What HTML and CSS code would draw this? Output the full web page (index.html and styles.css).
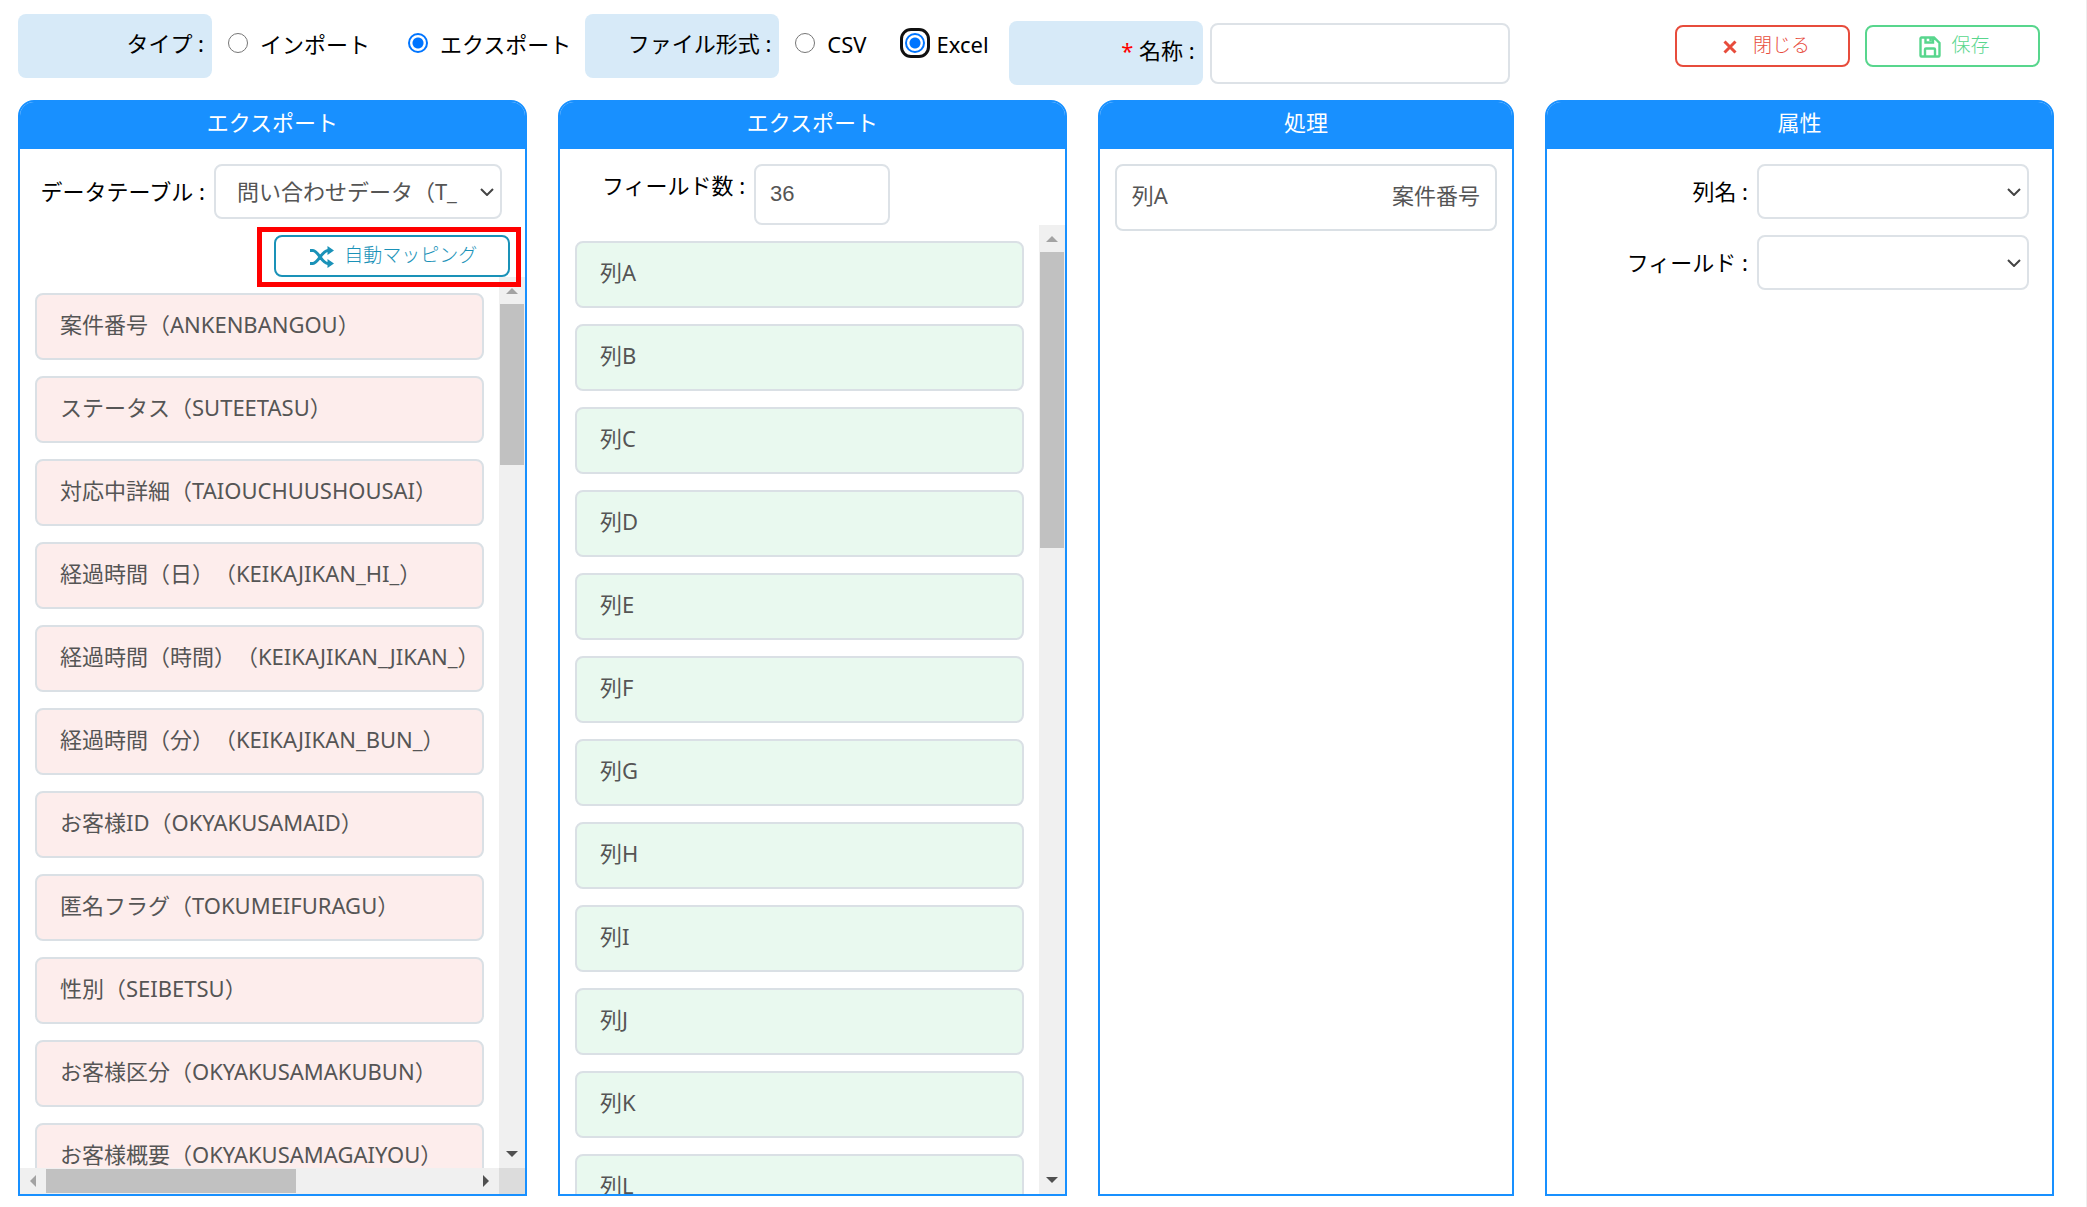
FILE: index.html
```html
<!DOCTYPE html>
<html lang="ja">
<head>
<meta charset="utf-8">
<title>エクスポート設定</title>
<link rel="stylesheet" href="styles.css">
</head>
<body>
<form class="page">
  <header class="toolbar">
    <div class="group" role="radiogroup" aria-labelledby="type-label">
      <span class="tag" id="type-label">タイプ :</span>
      <label class="option"><input class="radio" type="radio" name="type">インポート</label>
      <label class="option"><input class="radio" type="radio" name="type" checked>エクスポート</label>
    </div>
    <div class="group group-format" role="radiogroup" aria-labelledby="format-label">
      <span class="tag" id="format-label">ファイル形式 :</span>
      <label class="option"><input class="radio" type="radio" name="format">CSV</label>
      <label class="option"><input class="radio radio-focus" type="radio" name="format" checked>Excel</label>
    </div>
    <div class="group group-name">
      <label class="tag" for="name"><span class="required">*</span> 名称 :</label>
      <input class="field name-field" id="name" type="text">
    </div>
    <div class="actions">
      <button class="btn btn-close" type="button">
        <svg class="icon icon-close" viewBox="0 0 14 14" aria-hidden="true"><path d="M1.500 1.500L12.500 12.500M12.500 1.500L1.500 12.500" fill="none" stroke="currentColor" stroke-width="3"/></svg>
        閉じる
      </button>
      <button class="btn btn-save" type="button">
        <svg class="icon icon-save" viewBox="0 0 22 22" aria-hidden="true"><path d="M2.500 1.500H15L20.500 7V19.500A1 1 0 0 1 19.500 20.500H2.500A1 1 0 0 1 1.500 19.500V2.500A1 1 0 0 1 2.500 1.500ZM6.500 1.500V6.500H14V1.500M11.500 2V5M6 20.500V13.500A1 1 0 0 1 7 12.500H15A1 1 0 0 1 16 13.500V20.500" fill="none" stroke="currentColor" stroke-width="2.400"/></svg>
        保存
      </button>
    </div>
  </header>

  <main class="panels">
    <section class="panel">
      <h2 class="panel-title">エクスポート</h2>
      <div class="row">
        <label class="row-label" for="table">データテーブル :</label>
        <select class="field select table-select" id="table"><option>問い合わせデータ（T_</option></select>
      </div>
      <div class="row row-map">
        <div class="highlight">
          <button class="btn btn-map" type="button">
            <svg class="icon icon-shuffle" viewBox="0 0 24 22" aria-hidden="true"><path d="M0 4.500H3C8 4.500 12 17.500 18 17.500H19M0 17.500H3C8 17.500 12 4.500 18 4.500H19" fill="none" stroke="currentColor" stroke-width="3"/><path d="M17.500 0L24 4.500L17.500 9ZM17.500 13L24 17.500L17.500 22Z" fill="currentColor"/></svg>
            自動マッピング
          </button>
        </div>
      </div>
      <div class="scroller scroller-both">
        <ul class="list list-source">
          <li class="item">案件番号（ANKENBANGOU）</li>
          <li class="item">ステータス（SUTEETASU）</li>
          <li class="item">対応中詳細（TAIOUCHUUSHOUSAI）</li>
          <li class="item">経過時間（日）（KEIKAJIKAN_HI_）</li>
          <li class="item">経過時間（時間）（KEIKAJIKAN_JIKAN_）</li>
          <li class="item">経過時間（分）（KEIKAJIKAN_BUN_）</li>
          <li class="item">お客様ID（OKYAKUSAMAID）</li>
          <li class="item">匿名フラグ（TOKUMEIFURAGU）</li>
          <li class="item">性別（SEIBETSU）</li>
          <li class="item">お客様区分（OKYAKUSAMAKUBUN）</li>
          <li class="item">お客様概要（OKYAKUSAMAGAIYOU）</li>
        </ul>
        <div class="bar bar-v"><i class="arrow up"></i><i class="thumb thumb-source"></i><i class="arrow down"></i></div>
        <div class="bar bar-h"><i class="arrow left"></i><i class="thumb thumb-wide"></i><i class="arrow right"></i></div>
        <div class="corner"></div>
      </div>
    </section>

    <section class="panel">
      <h2 class="panel-title">エクスポート</h2>
      <div class="row row-count">
        <label class="row-label" for="count">フィールド数 :</label>
        <input class="field count-field" id="count" type="text" value="36">
      </div>
      <div class="scroller">
        <ul class="list list-target">
          <li class="item">列A</li>
          <li class="item">列B</li>
          <li class="item">列C</li>
          <li class="item">列D</li>
          <li class="item">列E</li>
          <li class="item">列F</li>
          <li class="item">列G</li>
          <li class="item">列H</li>
          <li class="item">列I</li>
          <li class="item">列J</li>
          <li class="item">列K</li>
          <li class="item">列L</li>
        </ul>
        <div class="bar bar-v"><i class="arrow up"></i><i class="thumb thumb-target"></i><i class="arrow down"></i></div>
      </div>
    </section>

    <section class="panel">
      <h2 class="panel-title">処理</h2>
      <div class="item item-pair"><span>列A</span><span>案件番号</span></div>
    </section>

    <section class="panel">
      <h2 class="panel-title">属性</h2>
      <div class="row row-attr">
        <label class="row-label" for="column">列名 :</label>
        <select class="field select attr-select" id="column"></select>
      </div>
      <div class="row row-attr">
        <label class="row-label" for="attr-field">フィールド :</label>
        <select class="field select attr-select" id="attr-field"></select>
      </div>
    </section>
  </main>
</form>
</body>
</html>
```
FILE: styles.css
```css
* { box-sizing: border-box; }

body {
  margin: 0;
  background: #fff;
  color: #000;
  font: 22px/32px "Noto Sans", "Noto Sans CJK JP", sans-serif;
  text-spacing-trim: space-all;
}

.page {
  display: flex;
  flex-direction: column;
  height: 100vh;
  padding: 14px 32px 11px 18px;
  border-right: 1px solid #eee;
}

/* Toolbar */
.toolbar {
  display: flex;
  align-items: flex-start;
  height: 86px;
}
.group {
  display: flex;
  align-items: center;
  margin-right: 14px;
}
.group-format { margin-right: 20px; }
.group-name { margin-top: 7px; }
.tag {
  width: 194px;
  height: 64px;
  padding: 13px 8px 0 0;
  border-radius: 8px;
  background: #d7eaf8;
  text-align: right;
  white-space: nowrap;
}
.required { color: #f00; }
.option {
  display: flex;
  align-items: center;
  margin: 0 0 4px 16px;
  white-space: nowrap;
}
.option + .option { margin-left: 38px; }
.radio {
  position: relative;
  width: 20px;
  height: 20px;
  margin: 0 12px 2px 0;
  border: 1px solid #767676;
  border-radius: 50%;
  appearance: none;
}
.radio:checked {
  border: 2px solid #0075ff;
  background: radial-gradient(circle, #0075ff 5px, #fff 6px);
}
.radio-focus::after {
  content: "";
  position: absolute;
  inset: -7px;
  border: 3px solid #101010;
  border-radius: 11px;
}
.actions {
  display: flex;
  gap: 15px;
  margin: 11px 14px 0 auto;
}

/* Controls */
.field {
  border: 2px solid #dde2e7;
  border-radius: 8px;
  background: #fff;
  color: #555;
  font: inherit;
}
.name-field {
  width: 300px;
  height: 61px;
  margin-left: 7px;
  padding: 0 16px;
}
.btn {
  display: flex;
  align-items: center;
  justify-content: center;
  gap: 10px;
  width: 175px;
  height: 42px;
  padding: 0 0 3px 4px;
  border: 2px solid currentColor;
  border-radius: 8px;
  background: #fff;
  font: inherit;
  font-size: 19px;
  font-weight: 300;
  line-height: 24px;
}
.btn-close { gap: 16px; padding-left: 8px; color: #e74c3c; }
.btn-save { color: #58d68d; }
.btn-map { width: 236px; color: #1a92b8; }
.icon { margin-top: 4px; }
.icon-close { width: 14px; height: 14px; }
.icon-save { width: 22px; height: 22px; }
.icon-shuffle { width: 24px; height: 22px; }
.select {
  height: 55px;
  padding-bottom: 2px;
  appearance: none;
  background: #fff url("data:image/svg+xml,%3Csvg xmlns='http://www.w3.org/2000/svg' width='14' height='8'%3E%3Cpath d='M1 1L7 7L13 1' fill='none' stroke='%23444' stroke-width='2'/%3E%3C/svg%3E") no-repeat right 6px center;
}

/* Panels */
.panels {
  display: grid;
  grid-template-columns: 11fr 11fr 9fr 11fr;
  gap: 31px;
  flex: 1;
  min-height: 0;
}
.panel {
  display: flex;
  flex-direction: column;
  min-width: 0;
  min-height: 0;
  border: 2px solid #1890ff;
  border-radius: 16px 16px 0 0;
}
.panel-title {
  flex: none;
  height: 47px;
  margin: 0 0 15px;
  padding-top: 4px;
  border-radius: 14px 14px 0 0;
  background: #1890ff;
  color: #fff;
  font-size: 22px;
  font-weight: 400;
  line-height: 32px;
  text-align: center;
}
.row {
  display: flex;
  align-items: center;
  justify-content: flex-end;
  flex: none;
  padding-right: 23px;
}
.row-label {
  margin-right: 9px;
  padding-bottom: 2px;
  white-space: nowrap;
}
.table-select {
  width: 288px;
  padding: 0 40px 2px 21px;
}
.row-map { padding: 8px 4px 0; }
.highlight {
  position: relative;
  z-index: 1;
  margin-bottom: -10px;
  padding: 3px 6px 5px 12px;
  border: 5px solid #f00;
}
.row-count {
  align-items: flex-start;
  justify-content: flex-start;
  padding-left: 42px;
}
.row-count .row-label { padding-top: 5px; }
.count-field {
  width: 136px;
  height: 61px;
  padding: 0 14px 2px;
  font-family: "Liberation Sans", sans-serif;
}
.row-attr { margin-bottom: 16px; }
.attr-select { width: 272px; }

/* Lists */
.scroller {
  display: grid;
  grid-template-columns: 1fr 26px;
  grid-template-rows: minmax(0, 1fr);
  flex: 1;
  min-height: 0;
}
.scroller-both { grid-template-rows: minmax(0, 1fr) 26px; }
.list {
  display: flex;
  flex-direction: column;
  gap: 16px;
  min-width: 0;
  margin: 0;
  padding: 16px 15px 0;
  overflow: hidden;
  list-style: none;
}
.item {
  flex: none;
  height: 67px;
  padding: 13px 0 0 23px;
  border: 2px solid #dae0e5;
  border-radius: 8px;
  color: #555;
  white-space: nowrap;
}
.list-source .item { background: #fdedec; }
.list-target .item { background: #e9f9ef; }
.item-pair {
  display: flex;
  justify-content: space-between;
  margin: 0 15px;
  padding: 13px 15px 0;
}

/* Scroll bars */
.bar {
  display: flex;
  align-items: center;
  background: #f0f0f0;
}
.bar-v { flex-direction: column; }
.bar-v .thumb { width: 24px; }
.bar-h .thumb { height: 24px; }
.thumb { background: #c1c1c1; }
.thumb-source { height: 161px; }
.thumb-target { height: 296px; }
.thumb-wide { width: 250px; }
.corner { background: #dcdcdc; }
.arrow { border: 6px solid transparent; }
.up { margin: 11px 0 10px; border-top: 0; border-bottom-color: #a3a3a3; }
.down { margin: auto 0 11px; border-bottom: 0; border-top-color: #505050; }
.left { margin: 0 10px 0 10px; border-left: 0; border-right-color: #a3a3a3; }
.right { margin: 0 10px 0 auto; border-right: 0; border-left-color: #505050; }
```
